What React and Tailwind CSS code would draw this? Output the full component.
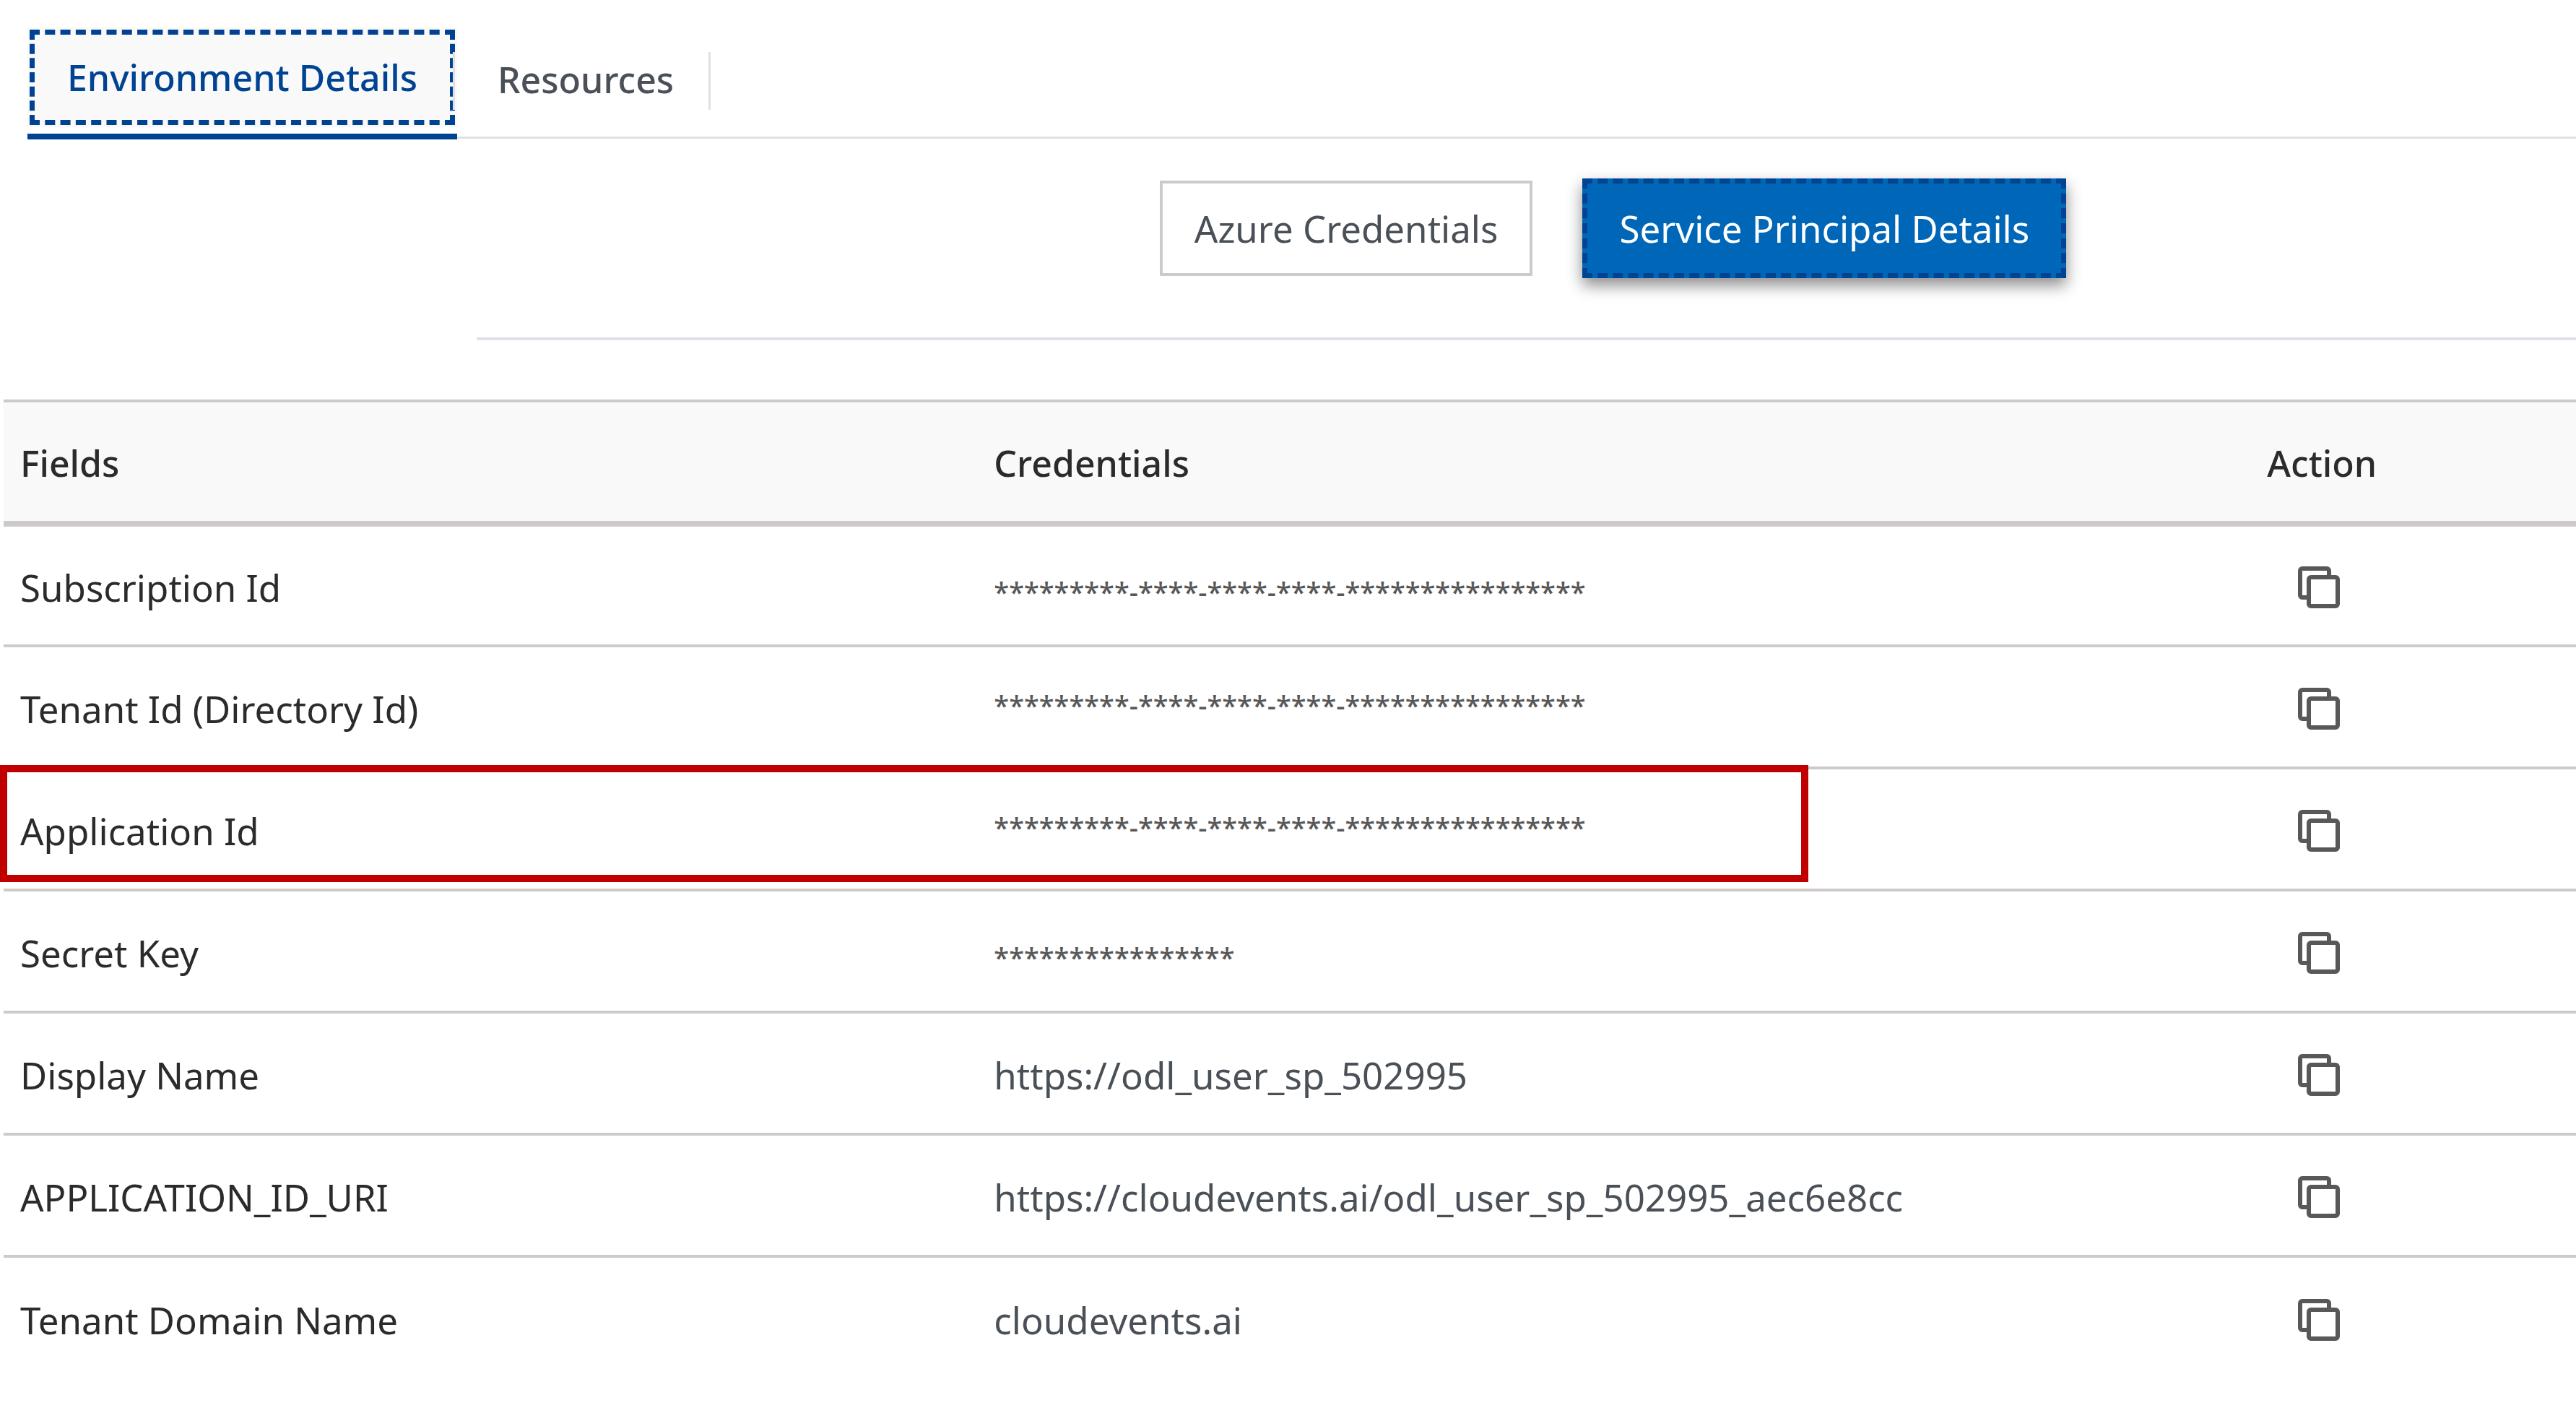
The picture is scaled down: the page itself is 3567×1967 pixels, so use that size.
const ROWS = [
  { field: "Subscription Id", value: "*********-****-****-****-****************", masked: true },
  { field: "Tenant Id (Directory Id)", value: "*********-****-****-****-****************", masked: true, raised: true },
  { field: "Application Id", value: "*********-****-****-****-****************", masked: true, raised: true, highlighted: true },
  { field: "Secret Key", value: "****************", masked: true },
  { field: "Display Name", value: "https://odl_user_sp_502995" },
  { field: "APPLICATION_ID_URI", value: "https://cloudevents.ai/odl_user_sp_502995_aec6e8cc" },
  { field: "Tenant Domain Name", value: "cloudevents.ai" },
];

function CopyIcon() {
  return (
    <svg className="h-[58px] w-[58px]" viewBox="0 0 58 58" fill="none" stroke="#585858" strokeWidth="6" aria-hidden="true">
      <path d="M43 12V6a3 3 0 0 0-3-3H6a3 3 0 0 0-3 3v34a3 3 0 0 0 3 3h6" />
      <rect x="15" y="15" width="40" height="40" rx="3" />
    </svg>
  );
}

function Tabs() {
  return (
    <div role="tablist" className="ml-[38px] flex border-b-[3px] border-[#dee2e6] pt-[38px] text-[50px]">
      <div className="-mb-[4px] border-b-8 border-[#004393] pb-[9px]">
        <div className="relative bg-[#f9f9f9] p-[3px]">
          <button
            role="tab"
            aria-selected="true"
            className="flex h-[132px] items-center border-7 border-dashed border-[#004393] px-[45px] font-medium text-[#004393]"
          >
            Environment Details
          </button>
          <span className="absolute top-[34px] right-[3px] h-[80px] w-[3px] bg-[#dee2e6]" />
        </div>
      </div>
      <button
        role="tab"
        aria-selected="false"
        className="mt-[34px] flex h-[80px] items-center border-r-[3px] border-[#dee2e6] pr-[48px] pb-1 pl-[56px] font-medium text-[#495057]"
      >
        Resources
      </button>
    </div>
  );
}

function valueClass(row) {
  if (!row.masked) return "pt-1 pl-[23px] text-[#495057]";
  return row.raised
    ? "pb-1.5 pl-[23px] text-[38px] font-medium text-[#585858]"
    : "pt-4 pl-[23px] text-[38px] font-medium text-[#585858]";
}

function Credentials() {
  return (
    <table className="ml-[5px] w-full table-fixed border-collapse">
      <thead>
        <tr className="h-[170px] border-t-4 border-b-8 border-[#cecaca] bg-[#f9f9f9] text-[50px] text-[#2b2b2b]">
          <th scope="col" className="w-[37.8%] pt-1 pl-[23px] text-left font-medium">Fields</th>
          <th scope="col" className="w-[42.2%] pt-1 pl-[23px] text-left font-medium">Credentials</th>
          <th scope="col" className="w-[20%] pt-1 text-center font-medium">Action</th>
        </tr>
      </thead>
      <tbody>
        {ROWS.map((row) => (
          <tr key={row.field} className="relative h-[169px] border-b-4 border-[#cecaca] last:border-b-0">
            <td className="pt-1 pl-[23px] text-[#2b2b2b]">
              {row.field}
              {row.highlighted && (
                <span className="pointer-events-none absolute -top-[4px] -left-[5px] h-[162px] w-[70.2%] border-10 border-[#c00000]" />
              )}
            </td>
            <td className={valueClass(row)}>{row.value}</td>
            <td className="pt-1 pr-2">
              <button aria-label={"Copy " + row.field} className="mx-auto block">
                <CopyIcon />
              </button>
            </td>
          </tr>
        ))}
      </tbody>
    </table>
  );
}

export default function App() {
  return (
    <main className="min-h-screen overflow-hidden bg-white font-['Noto_Sans',sans-serif] text-[51px] leading-[72px]">
      <Tabs />
      <div className="ml-[660px] flex items-center justify-center gap-[69px] border-b-4 border-[#dee2e6] pt-[55px] pb-[82px] pl-60">
        <button className="h-[132px] border-4 border-[#cecaca] bg-white px-[44px] text-[#495057]">
          Azure Credentials
        </button>
        <button className="h-[138px] border-7 border-dashed border-[#004393] bg-[#0067b8] px-[44px] text-white shadow-[0_10px_20px_rgba(0,0,0,0.45)]">
          Service Principal Details
        </button>
      </div>
      <div className="pt-[82px]">
        <Credentials />
      </div>
    </main>
  );
}
